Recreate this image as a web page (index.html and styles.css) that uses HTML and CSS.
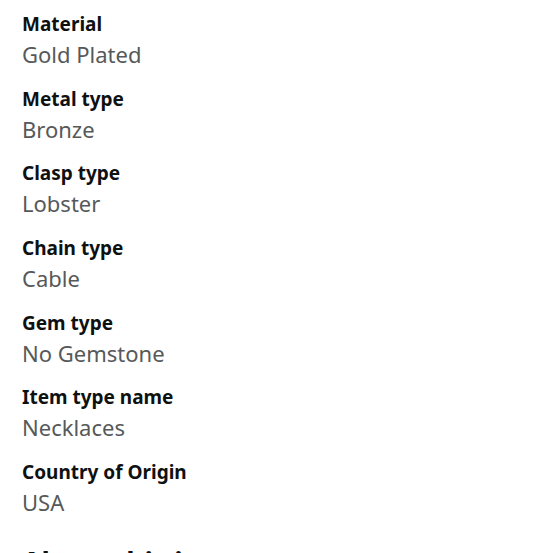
FILE: index.html
```html
<!DOCTYPE html>
<html>
<head>
<meta charset="utf-8">
<link rel="stylesheet" href="styles.css">
</head>
<body>
<div class="specs">
  <div class="spec"><div class="label">Material</div><div class="value">Gold Plated</div></div>
  <div class="spec"><div class="label">Metal type</div><div class="value">Bronze</div></div>
  <div class="spec"><div class="label">Clasp type</div><div class="value">Lobster</div></div>
  <div class="spec"><div class="label">Chain type</div><div class="value">Cable</div></div>
  <div class="spec"><div class="label">Gem type</div><div class="value">No Gemstone</div></div>
  <div class="spec"><div class="label">Item type name</div><div class="value">Necklaces</div></div>
  <div class="spec"><div class="label">Country of Origin</div><div class="value">USA</div></div>
</div>
<h2 class="heading">About this item</h2>
</body>
</html>
```
FILE: styles.css
```css
html, body {
  margin: 0;
  padding: 0;
  background: #ffffff;
  overflow: hidden;
}
body {
  font-family: "Noto Sans", "Open Sans", sans-serif;
  padding: 12px 22px 0 22px;
}
.specs {
  display: flex;
  flex-direction: column;
  gap: 18.67px;
}
.label {
  font-size: 19px;
  line-height: 24px;
  font-weight: 700;
  color: #0f1111;
}
.value {
  margin-top: 4px;
  font-size: 22px;
  line-height: 28px;
  color: #565959;
}
.heading {
  margin: 29px 0 0 0;
  font-size: 28px;
  line-height: 34px;
  font-weight: 700;
  color: #0f1111;
}
```
